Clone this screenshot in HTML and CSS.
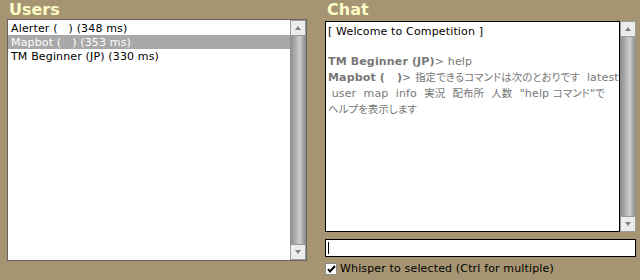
FILE: index.html
```html
<!DOCTYPE html>
<html lang="en">
<head>
    <meta charset="UTF-8">
    <title>Competition Lobby</title>
    <link rel="stylesheet" href="styles.css">
</head>
<body>
    <div class="lobby">
        <!-- user list -->
        <div class="users">
            <h2 class="title">Users</h2>
            <div class="list-box">
                <ul class="rows">
                    <li>Alerter (   ) (348 ms)</li>
                    <li class="selected">Mapbot (   ) (353 ms)</li>
                    <li>TM Beginner (JP) (330 ms)</li>
                </ul>
                <div class="scrollbar">
                    <div class="arrow up"></div>
                    <div class="track"></div>
                    <div class="arrow down"></div>
                </div>
            </div>
        </div>

        <!-- chat -->
        <div class="chat">
            <h2 class="title">Chat</h2>
            <div class="chat-box">
                <div class="log">
                    <div class="line">[ Welcome to Competition ]</div>
                    <div class="line">&nbsp;</div>
                    <div class="line msg"><b>TM Beginner (JP)</b>&gt; help</div>
                    <div class="line msg"><b>Mapbot (   )</b>&gt; <span class="ja">指定できるコマンドは次のとおりです</span>  latest<br> user  map  info  <span class="ja">実況</span>  <span class="ja">配布所</span>  <span class="ja">人数</span>  "help <span class="ja">コマンド</span>"<span class="ja">で</span><br><span class="ja">ヘルプを表示します</span></div>
                </div>
                <div class="scrollbar">
                    <div class="arrow up"></div>
                    <div class="track"></div>
                    <div class="arrow down"></div>
                </div>
            </div>
            <div class="input-box"><span class="caret"></span><input type="text" class="chat-input"></div>
            <label class="whisper">
                <span class="check">
                    <svg width="9" height="8" viewBox="0 0 9 8"><path d="M1 4 L3 6.5 L8 1" fill="none" stroke="#000" stroke-width="2"/></svg>
                </span>
                Whisper to selected (Ctrl for multiple)
            </label>
        </div>
    </div>
</body>
</html>
```

FILE: styles.css
```css
body {
    margin: 0;
    background-color: #a69572;
    font-family: "DejaVu Sans", Verdana, "Noto Sans CJK JP", sans-serif;
    font-size: 11px;
    letter-spacing: 0.15px;
    color: #000;
}

.lobby {
    display: flex;
    gap: 18px;
    padding-left: 7px;
}

.users {
    width: 300px;
}

.chat {
    width: 311px;
}

.title {
    margin: 0;
    height: 19px;
    padding-left: 2px;
    font-size: 16px;
    line-height: 19px;
    font-weight: bold;
    letter-spacing: 0;
    color: #fcfcc6;
}

.list-box {
    display: flex;
    height: 240px;
    border: 1px solid #666;
    background: #fff;
}

.rows {
    flex: 1;
    list-style: none;
    margin: 0;
    padding: 1px 0 0 0;
}

.rows li {
    height: 14px;
    line-height: 15px;
    padding-left: 3px;
    white-space: pre;
}

.rows li.selected {
    background-color: #a9a9a9;
    color: #fff;
}

/* fake scrollbar */
.scrollbar {
    width: 16px;
    flex-shrink: 0;
    display: flex;
    flex-direction: column;
}

.arrow {
    height: 14px;
    border: 1px solid #9a9a9a;
    background: #ececec;
    position: relative;
}

.arrow::after {
    content: "";
    position: absolute;
    left: 4px;
    border-left: 3px solid transparent;
    border-right: 3px solid transparent;
}

.arrow.up::after {
    top: 5px;
    border-bottom: 4px solid #808080;
}

.arrow.down::after {
    top: 5px;
    border-top: 4px solid #808080;
}

.track {
    flex: 1;
    background: linear-gradient(to right, #8c8c8c, #a8a8a8 30%, #cfcfcf 60%, #a0a0a0 85%, #8a8a8a);
}

.chat-box {
    display: flex;
    height: 211px;
    margin-top: 2px;
}

.log {
    flex: 1;
    min-width: 0;
    overflow: hidden;
    border: 1px solid #000;
    background: #fff;
    padding: 2px 2px 0;
}

.line {
    line-height: 15px;
    white-space: pre;
}

.msg {
    color: #777;
}

/* japanese runs: proportional kana */
.ja {
    font-family: "Noto Sans CJK JP", sans-serif;
    font-size: 10.5px;
    letter-spacing: 0;
    font-feature-settings: "palt";
}

.input-box {
    display: flex;
    align-items: center;
    height: 16px;
    margin-top: 7px;
    border: 1px solid #000;
    background: #fff;
}

.caret {
    width: 1px;
    height: 12px;
    margin-left: 2px;
    background: #000;
}

.chat-input {
    flex: 1;
    min-width: 0;
    border: none;
    outline: none;
    padding: 0;
    height: 16px;
    background: transparent;
}

.whisper {
    display: flex;
    align-items: center;
    gap: 3px;
    margin-top: 5px;
}

.check {
    width: 10px;
    height: 10px;
    border: 1px solid #8a8a8a;
    background: #fff;
    display: flex;
    align-items: center;
    justify-content: center;
}
```
